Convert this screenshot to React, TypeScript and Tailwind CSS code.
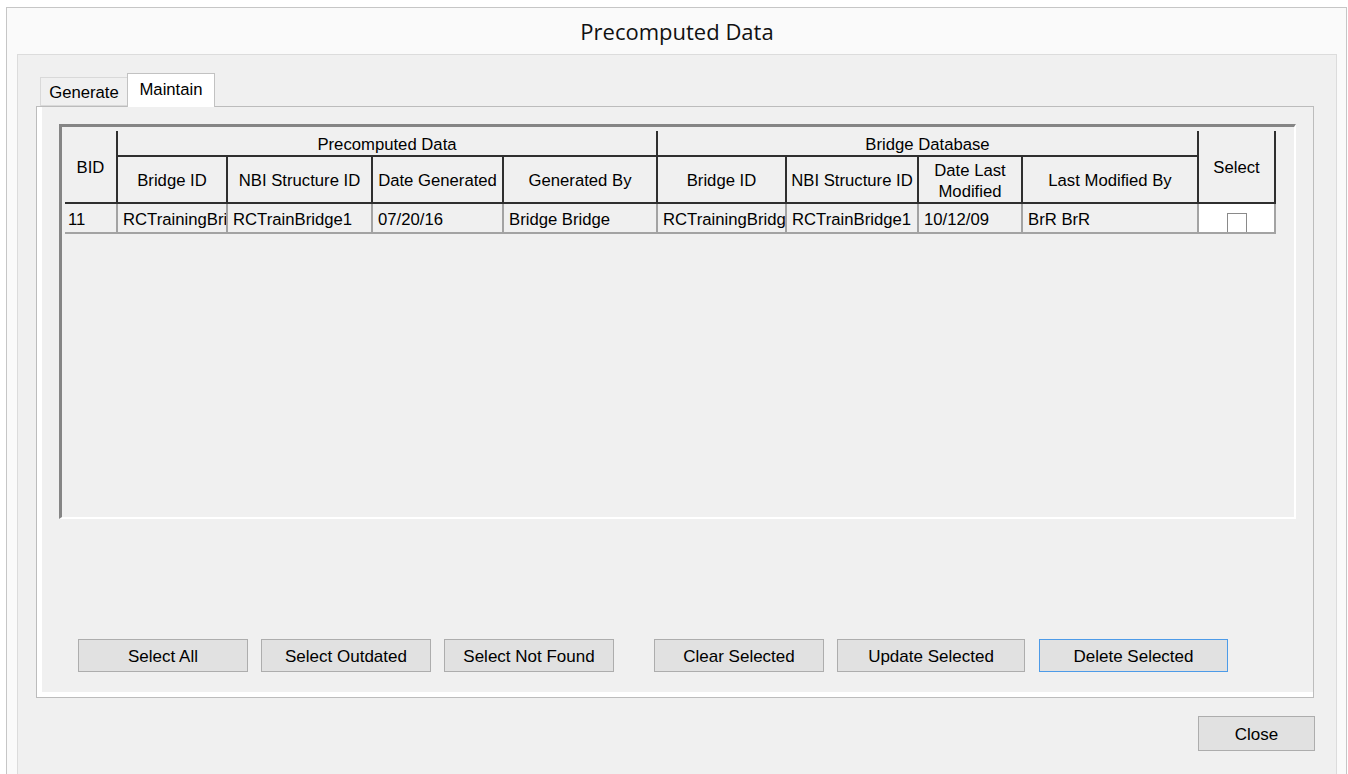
import { useState } from 'react';

// Rows shown in the Maintain grid
const rows = [
  {
    bid: '11',
    preBridgeId: 'RCTrainingBridge1',
    preNbi: 'RCTrainBridge1',
    dateGenerated: '07/20/16',
    generatedBy: 'Bridge Bridge',
    dbBridgeId: 'RCTrainingBridge1',
    dbNbi: 'RCTrainBridge1',
    dateModified: '10/12/09',
    modifiedBy: 'BrR BrR',
  },
];

const headCell =
  'flex items-center justify-center text-center pt-[3px] border-r-2 border-b-2 border-[#2f2f2f] bg-[#f0f0f0] overflow-hidden whitespace-nowrap';
const dataCell =
  'flex items-center pl-[5px] pt-[4px] border-r-2 border-b-2 border-[#a3a3a3] bg-[#f0f0f0] overflow-hidden whitespace-nowrap';

function WinButton({
  label,
  width,
  focused,
}: {
  label: string;
  width: string;
  focused?: boolean;
}) {
  return (
    <button
      className={`${width} h-[33px] bg-[#e1e1e1] border text-[17px] text-black leading-none pt-[1px] ${
        focused ? 'border-[#4d9be8]' : 'border-[#adadad]'
      }`}
    >
      {label}
    </button>
  );
}

export default function App() {
  const [tab, setTab] = useState<'generate' | 'maintain'>('maintain');
  const [checked, setChecked] = useState<Record<string, boolean>>({});

  return (
    <div className="w-[1348px] h-[774px] bg-white pt-[7px] pl-[6px] overflow-hidden font-['Liberation_Sans',Arial,sans-serif] text-black">
      {/* Dialog window */}
      <div className="w-[1341px] h-[780px] border-t border-l border-r border-[#c6c6c6] bg-[#fafafa] pl-[10px] pr-[9px] flex flex-col">
        <div className="h-[46px] flex items-center justify-center font-['Open_Sans',sans-serif] text-[22px] text-[#111]">
          Precomputed Data
        </div>

        <div className="flex-1 border border-[#dcdcdc] bg-[#f0f0f0] pt-[18px] pl-[18px]">
          {/* Tab strip */}
          <div className="flex items-end h-[34px] pl-[4px] text-[16.7px]">
            <button
              onClick={() => setTab('generate')}
              className="w-[87px] h-[29px] mb-[1px] border border-[#d9d9d9] border-r-0 bg-[#f0f0f0] flex items-center justify-center pt-[3px]"
            >
              Generate
            </button>
            <button
              onClick={() => setTab('maintain')}
              className="relative z-10 w-[88px] h-[34px] border border-b-0 border-[#c2c2c2] bg-white flex items-center justify-center pb-[1px]"
            >
              Maintain
            </button>
          </div>

          {/* Tab page */}
          <div className="-mt-[1px] w-[1278px] h-[592px] border border-[#bcbcbc] bg-white pl-[5px] pb-[5px] flex">
            <div className="flex-1 bg-[#f0f0f0] flex flex-col">
              {tab === 'maintain' && (
                <>
                  {/* Data grid */}
                  <div className="ml-[17px] mt-[17px] w-[1237px] h-[395px] border-l-[3px] border-t-[3px] border-[#858585] border-r-2 border-b-2 border-r-white border-b-white bg-[#f0f0f0] pl-[3px] pt-[4px]">
                    <div className="grid grid-cols-[53px_110px_145px_131px_154px_129px_132px_104px_176px_77px] grid-rows-[26px_47px_30px] text-[16.7px]">
                      <div className={`${headCell} row-span-2`}>BID</div>
                      <div className={`${headCell} col-span-4`}>Precomputed Data</div>
                      <div className={`${headCell} col-span-4`}>Bridge Database</div>
                      <div className={`${headCell} row-span-2`}>Select</div>

                      <div className={headCell}>Bridge ID</div>
                      <div className={headCell}>NBI Structure ID</div>
                      <div className={headCell}>Date Generated</div>
                      <div className={headCell}>Generated By</div>
                      <div className={headCell}>Bridge ID</div>
                      <div className={headCell}>NBI Structure ID</div>
                      <div className={`${headCell} leading-[21px] whitespace-normal`}>
                        Date Last
                        <br />
                        Modified
                      </div>
                      <div className={headCell}>Last Modified By</div>

                      {rows.map((r) => (
                        <div key={r.bid} className="contents">
                          <div className={`${dataCell} !pl-[3px]`}>{r.bid}</div>
                          <div className={dataCell}>
                            <span className="block min-w-0 overflow-hidden">{r.preBridgeId}</span>
                          </div>
                          <div className={dataCell}>{r.preNbi}</div>
                          <div className={dataCell}>{r.dateGenerated}</div>
                          <div className={dataCell}>{r.generatedBy}</div>
                          <div className={dataCell}>
                            <span className="block min-w-0 overflow-hidden">{r.dbBridgeId}</span>
                          </div>
                          <div className={dataCell}>{r.dbNbi}</div>
                          <div className={dataCell}>{r.dateModified}</div>
                          <div className={dataCell}>{r.modifiedBy}</div>
                          <div className="flex justify-center pt-[9px] border-r-2 border-b-2 border-[#a3a3a3] bg-white overflow-hidden">
                            <button
                              onClick={() =>
                                setChecked((c) => ({ ...c, [r.bid]: !c[r.bid] }))
                              }
                              className="w-[20px] h-[20px] shrink-0 border border-[#8a8a8a] bg-white flex items-center justify-center text-[14px] leading-none"
                            >
                              {checked[r.bid] ? '✓' : ''}
                            </button>
                          </div>
                        </div>
                      ))}
                    </div>
                  </div>

                  {/* Grid actions */}
                  <div className="flex items-center mt-[120px] ml-[36px]">
                    <WinButton label="Select All" width="w-[170px]" />
                    <div className="ml-[13px]">
                      <WinButton label="Select Outdated" width="w-[170px]" />
                    </div>
                    <div className="ml-[13px]">
                      <WinButton label="Select Not Found" width="w-[170px]" />
                    </div>
                    <div className="ml-[40px]">
                      <WinButton label="Clear Selected" width="w-[170px]" />
                    </div>
                    <div className="ml-[13px]">
                      <WinButton label="Update Selected" width="w-[188px]" />
                    </div>
                    <div className="ml-[14px]">
                      <WinButton label="Delete Selected" width="w-[189px]" focused />
                    </div>
                  </div>
                </>
              )}
            </div>
          </div>

          <div className="w-[1279px] flex justify-end mt-[18px]">
            <button className="w-[117px] h-[35px] bg-[#e1e1e1] border border-[#adadad] text-[17px] leading-none pt-[1px]">
              Close
            </button>
          </div>
        </div>
      </div>
    </div>
  );
}
